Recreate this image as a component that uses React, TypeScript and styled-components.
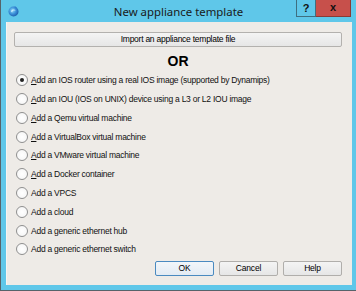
import React from 'react';
import styled, { createGlobalStyle } from 'styled-components';

const GlobalStyle = createGlobalStyle`
  html, body {
    margin: 0;
    padding: 0;
    background: #ffffff;
  }
`;

const options = [
  { label: 'Add an IOS router using a real IOS image (supported by Dynamips)', mnemonic: true },
  { label: 'Add an IOU (IOS on UNIX) device using a L3 or L2 IOU image', mnemonic: true },
  { label: 'Add a Qemu virtual machine', mnemonic: true },
  { label: 'Add a VirtualBox virtual machine', mnemonic: true },
  { label: 'Add a VMware virtual machine', mnemonic: true },
  { label: 'Add a Docker container', mnemonic: true },
  { label: 'Add a VPCS', mnemonic: false },
  { label: 'Add a cloud', mnemonic: false },
  { label: 'Add a generic ethernet hub', mnemonic: false },
  { label: 'Add a generic ethernet switch', mnemonic: false },
];

const AppIcon = () => (
  <svg width="11" height="12" viewBox="0 0 11 12">
    <defs>
      <radialGradient id="ball" cx="0.4" cy="0.4" r="0.65">
        <stop offset="0" stopColor="#8fd8f5" />
        <stop offset="0.55" stopColor="#3a8fd8" />
        <stop offset="1" stopColor="#1d5aa8" />
      </radialGradient>
    </defs>
    <circle cx="5.5" cy="6.5" r="5" fill="url(#ball)" />
    <path d="M3 6.5 C3.5 4 7 4 7.5 6 C6 5.2 4.5 5.5 4.2 7.5 Z" fill="#d8f3ff" opacity="0.8" />
    <path d="M6.5 1 L9 2.5 L7.5 3.5 Z" fill="#2f7fd0" />
  </svg>
);

export default function App() {
  return (
    <>
      <GlobalStyle />
      <Window>
        <TitleBar>
          <IconSlot>
            <AppIcon />
          </IconSlot>
          <Title>New appliance template</Title>
          <CaptionButtons>
            <HelpCaption>?</HelpCaption>
            <CloseCaption>x</CloseCaption>
          </CaptionButtons>
        </TitleBar>
        <Client>
          <PushButton>Import an appliance template file</PushButton>
          <OrLabel>OR</OrLabel>
          <RadioList>
            {options.map((opt, i) => (
              <RadioRow key={opt.label}>
                <Radio checked={i === 0} />
                <RadioText>
                  {opt.mnemonic ? (
                    <>
                      <u>A</u>
                      {opt.label.slice(1)}
                    </>
                  ) : (
                    opt.label
                  )}
                </RadioText>
              </RadioRow>
            ))}
          </RadioList>
          <ButtonRow>
            <DialogButton $primary>OK</DialogButton>
            <DialogButton>Cancel</DialogButton>
            <DialogButton>Help</DialogButton>
          </ButtonRow>
        </Client>
      </Window>
    </>
  );
}

const Window = styled.div`
  width: 356px;
  height: 291px;
  box-sizing: border-box;
  background: #5fc7e9;
  border-left: 1px solid #56636a;
  border-bottom: 1px solid #56636a;
  display: flex;
  flex-direction: column;
  font-family: 'Liberation Sans', Arial, sans-serif;
  color: #000;
`;

const TitleBar = styled.div`
  height: 22px;
  display: grid;
  grid-template-columns: 1fr auto 1fr;
  align-items: start;
`;

const IconSlot = styled.div`
  padding: 5px 0 0 7px;
  line-height: 0;
`;

const Title = styled.div`
  font-family: 'Noto Sans', 'Liberation Sans', sans-serif;
  font-size: 11.4px;
  line-height: 22px;
  color: #1a1a1a;
  padding-top: 1px;
`;

const CaptionButtons = styled.div`
  justify-self: end;
  display: flex;
  margin-right: 5px;
`;

const HelpCaption = styled.div`
  width: 20px;
  height: 17px;
  box-sizing: border-box;
  border: 1px solid #3e6f80;
  border-top: none;
  font-weight: bold;
  font-size: 11px;
  line-height: 16px;
  text-align: center;
  color: #111;
`;

const CloseCaption = styled.div`
  width: 35px;
  height: 17px;
  box-sizing: border-box;
  background: #c7504b;
  border: 1px solid #8a3a35;
  border-top: none;
  border-left: none;
  font-weight: bold;
  font-size: 11px;
  line-height: 15px;
  text-align: center;
  color: #111;
`;

const Client = styled.div`
  margin: 0 4px 5px 5px;
  flex: 1;
  background: #eeebe7;
  border-left: 1px solid #f6f5f3;
  padding: 10px 10px 9px 7px;
  display: flex;
  flex-direction: column;
`;

const PushButton = styled.div`
  height: 15px;
  box-sizing: border-box;
  border: 1px solid #b3b1ae;
  border-radius: 2px;
  background: linear-gradient(#f4f4f4, #e6e6e6);
  font-size: 8.5px;
  letter-spacing: -0.25px;
  line-height: 13px;
  text-align: center;
`;

const OrLabel = styled.div`
  margin-top: 6px;
  font-size: 14px;
  font-weight: bold;
  line-height: 16px;
  text-align: center;
`;

const RadioList = styled.div`
  margin-top: 2px;
  display: flex;
  flex-direction: column;
`;

const RadioRow = styled.div`
  height: 18.78px;
  display: flex;
  align-items: center;
  padding-left: 2px;
`;

const Radio = styled.span<{ checked?: boolean }>`
  width: 12px;
  height: 12px;
  box-sizing: border-box;
  border-radius: 50%;
  border: 1px solid #8f8f8f;
  background: radial-gradient(circle, #ffffff 0%, #f3f3f3 100%);
  display: flex;
  align-items: center;
  justify-content: center;
  margin-right: 3px;

  &::after {
    content: '';
    width: 4px;
    height: 4px;
    border-radius: 50%;
    background: ${(p) => (p.checked ? '#222' : 'transparent')};
  }
`;

const RadioText = styled.span`
  font-size: 8.5px;
  letter-spacing: -0.25px;
  line-height: 12px;
  color: #111;

  u {
    text-decoration-thickness: 1px;
    text-underline-offset: 1px;
  }
`;

const ButtonRow = styled.div`
  margin-top: auto;
  display: flex;
  justify-content: flex-end;
  gap: 5px;
`;

const DialogButton = styled.div<{ $primary?: boolean }>`
  width: 59px;
  height: 15px;
  box-sizing: border-box;
  border: 1px solid ${(p) => (p.$primary ? '#4a8ac0' : '#b0aeab')};
  border-radius: 2px;
  background: ${(p) =>
    p.$primary ? 'linear-gradient(#f2f6fa, #e3ebf3)' : 'linear-gradient(#f4f4f4, #e6e6e6)'};
  font-size: 8.5px;
  letter-spacing: -0.2px;
  line-height: 13px;
  text-align: center;
`;
